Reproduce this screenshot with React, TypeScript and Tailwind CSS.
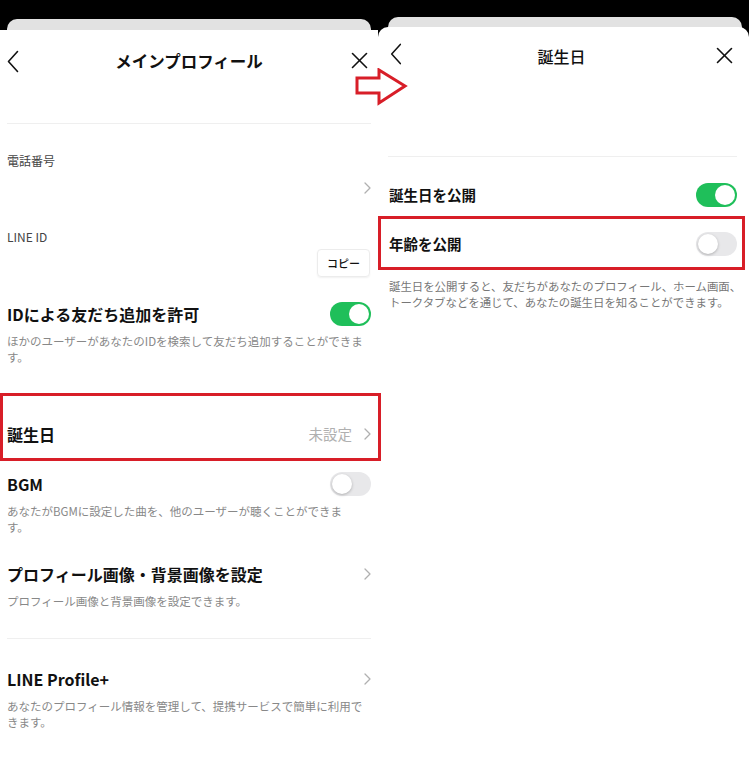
import React from "react";

const FONT = { fontFamily: '"Noto Sans CJK JP", "Noto Sans", sans-serif' };

function Toggle({ on }: { on: boolean }) {
  return on ? (
    <div className="w-[41px] h-[24px] rounded-full bg-[#1fbf5a] p-[2px] flex justify-end shrink-0">
      <div className="w-[20px] h-[20px] rounded-full bg-white" />
    </div>
  ) : (
    <div className="w-[41px] h-[24px] rounded-full bg-[#e8e8ea] p-[2px] flex justify-start shrink-0">
      <div className="w-[20px] h-[20px] rounded-full bg-white shadow-[0_1px_3px_rgba(0,0,0,0.25)]" />
    </div>
  );
}

function ChevronRight() {
  return (
    <svg width="7" height="12" viewBox="0 0 7 12" className="shrink-0">
      <polyline points="1,1 6,6 1,11" fill="none" stroke="#b0b0b0" strokeWidth="1.3" strokeLinecap="round" strokeLinejoin="round" />
    </svg>
  );
}

function BackIcon({ h = 23 }: { h?: number }) {
  return (
    <svg width="12" height={h} viewBox="0 0 12 23">
      <polyline points="10.5,1.5 1.5,11.5 10.5,21.5" fill="none" stroke="#111" strokeWidth="1.6" strokeLinecap="round" strokeLinejoin="round" />
    </svg>
  );
}

function CloseIcon() {
  return (
    <svg width="17" height="17" viewBox="0 0 17 17">
      <line x1="1.5" y1="1.5" x2="15.5" y2="15.5" stroke="#111" strokeWidth="1.6" strokeLinecap="round" />
      <line x1="15.5" y1="1.5" x2="1.5" y2="15.5" stroke="#111" strokeWidth="1.6" strokeLinecap="round" />
    </svg>
  );
}

export default function App() {
  return (
    <div className="w-[749px] h-[781px] bg-white flex relative overflow-hidden text-[#111]" style={FONT}>
      {/* Left panel */}
      <div className="w-[378px] shrink-0 flex flex-col">
        <div className="bg-black h-[30px] pt-[19px] px-[7px] shrink-0">
          <div className="h-[11px] bg-[#e2e2e2] rounded-t-[10px]" />
        </div>
        <div className="bg-white flex-1 flex flex-col">
          <div className="h-[60px] grid grid-cols-[60px_1fr_60px] items-center px-[7px]">
            <div className="flex items-center pt-[2px]"><BackIcon /></div>
            <div className="text-center text-[16.5px] font-bold leading-[22px] pt-[1px]">メインプロフィール</div>
            <div className="flex justify-end pr-[3px]"><CloseIcon /></div>
          </div>
          <div className="mt-[33px] h-px bg-[#efefef] mx-[7px]" />
          <div className="mt-[29px] px-[7px] text-[12px] leading-[16px] text-[#444]">電話番号</div>
          <div className="mt-[9px] h-[20px] px-[7px] flex justify-end items-center"><ChevronRight /></div>
          <div className="mt-[31px] px-[7px] text-[12px] leading-[16px] text-[#444]">LINE ID</div>
          <div className="mt-[4px] px-[8px] flex justify-end">
            <div className="h-[28px] w-[53px] rounded-[4px] border border-[#ececec] shadow-[0_1px_2px_rgba(0,0,0,0.06)] flex items-center justify-center text-[11px] font-medium">コピー</div>
          </div>
          <div className="mt-[24px] h-[25px] px-[7px] flex justify-between items-center">
            <span className="text-[16px] font-bold leading-[22px]">IDによる友だち追加を許可</span>
            <Toggle on />
          </div>
          <div className="mt-[7px] px-[7px] text-[11.5px] leading-[16px] text-[#888]">
            <div className="whitespace-nowrap">ほかのユーザーがあなたのIDを検索して友だち追加することができま</div>
            <div>す。</div>
          </div>
          <div className="mt-[28px] -mr-[3px] relative z-10 border-[3px] border-[#d81e28] pt-[27px] pb-[13px] pl-[4px] pr-[7px]">
            <div className="h-[22px] flex items-center justify-between">
              <span className="text-[16px] font-bold leading-[22px]">誕生日</span>
              <div className="flex items-center gap-[12px]">
                <span className="text-[14.5px] text-[#b0b0b0] leading-[22px]">未設定</span>
                <ChevronRight />
              </div>
            </div>
          </div>
          <div className="mt-[10px] h-[25px] px-[7px] flex justify-between items-center">
            <span className="text-[16px] font-bold leading-[22px]">BGM</span>
            <Toggle on={false} />
          </div>
          <div className="mt-[7px] px-[7px] text-[11.5px] leading-[16px] text-[#888]">
            <div className="whitespace-nowrap">あなたがBGMに設定した曲を、他のユーザーが聴くことができま</div>
            <div>す。</div>
          </div>
          <div className="mt-[28px] h-[22px] px-[7px] flex justify-between items-center">
            <span className="text-[16px] font-bold leading-[22px]">プロフィール画像・背景画像を設定</span>
            <ChevronRight />
          </div>
          <div className="mt-[8px] px-[7px] text-[11.5px] leading-[16px] text-[#888]">プロフィール画像と背景画像を設定できます。</div>
          <div className="mt-[29px] h-px bg-[#efefef] mx-[7px]" />
          <div className="mt-[29px] h-[22px] px-[7px] flex justify-between items-center">
            <span className="text-[16px] font-bold leading-[22px]">LINE Profile+</span>
            <ChevronRight />
          </div>
          <div className="mt-[8px] px-[7px] text-[11.5px] leading-[16px] text-[#888]">
            <div className="whitespace-nowrap">あなたのプロフィール情報を管理して、提携サービスで簡単に利用で</div>
            <div>きます。</div>
          </div>
        </div>
      </div>

      {/* Right panel */}
      <div className="w-[371px] shrink-0 flex flex-col bg-black">
        <div className="h-[28px] pt-[17px] pl-[10px] pr-[7px] shrink-0">
          <div className="h-[11px] bg-[#e2e2e2] rounded-t-[10px]" />
        </div>
        <div className="bg-white flex-1 flex flex-col rounded-t-[10px] -mt-[1px]">
          <div className="h-[57px] grid grid-cols-[60px_1fr_60px] items-center pl-[12px] pr-[16px]">
            <div className="flex items-center -mt-[4px]"><BackIcon h={22} /></div>
            <div className="text-center text-[16px] font-medium leading-[22px]">誕生日</div>
            <div className="flex justify-end"><CloseIcon /></div>
          </div>
          <div className="mt-[72px] h-px bg-[#efefef] ml-[10px] mr-[12px]" />
          <div className="mt-[26px] h-[24px] pl-[11px] pr-[12px] flex justify-between items-center">
            <span className="text-[14.5px] font-bold leading-[22px]">誕生日を公開</span>
            <Toggle on />
          </div>
          <div className="mt-[9px] mr-[4px] border-[3px] border-[#d81e28] pt-[13px] pb-[11px] pl-[8px] pr-[5px]">
            <div className="h-[24px] flex justify-between items-center">
              <span className="text-[14.5px] font-bold leading-[22px]">年齢を公開</span>
              <Toggle on={false} />
            </div>
          </div>
          <div className="mt-[8px] pl-[11px] text-[11.4px] leading-[16px] text-[#777]">
            <div className="whitespace-nowrap">誕生日を公開すると、友だちがあなたのプロフィール、ホーム画面、</div>
            <div className="whitespace-nowrap">トークタブなどを通じて、あなたの誕生日を知ることができます。</div>
          </div>
        </div>
      </div>

      {/* Annotation arrow */}
      <svg className="absolute left-[355px] top-[68px] z-20" width="54" height="38" viewBox="0 0 54 38">
        <polygon points="2,10 24,10 24,2 50,18 24,35 24,25 2,25" fill="#fff" stroke="#d81e28" strokeWidth="3" strokeLinejoin="miter" />
      </svg>
    </div>
  );
}
